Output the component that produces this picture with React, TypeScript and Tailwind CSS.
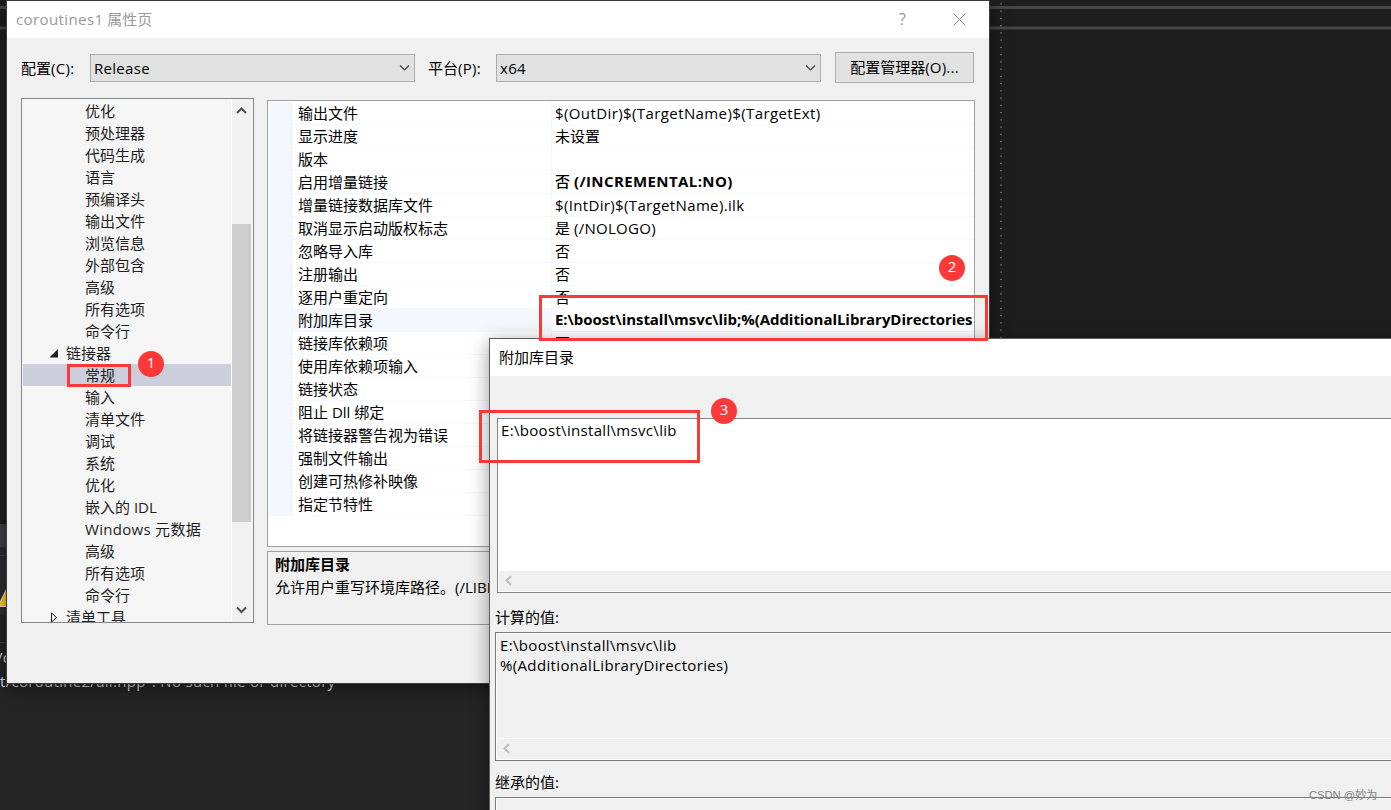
import React from "react";

const treeItems = [
  "优化", "预处理器", "代码生成", "语言", "预编译头", "输出文件", "浏览信息", "外部包含", "高级", "所有选项", "命令行",
  "链接器", "常规", "输入", "清单文件", "调试", "系统", "优化", "嵌入的 IDL", "Windows 元数据", "高级", "所有选项", "命令行", "清单工具",
];

type Property = { name: string; value: React.ReactNode; selected?: boolean };

const properties: Property[] = [
  { name: "输出文件", value: <span className="tracking-[0.4px]">$(OutDir)$(TargetName)$(TargetExt)</span> },
  { name: "显示进度", value: "未设置" },
  { name: "版本", value: "" },
  { name: "启用增量链接", value: <span className="-mt-0.5"><span className="font-medium">否</span> <b className="tracking-[0.4px]">(/INCREMENTAL:NO)</b></span> },
  { name: "增量链接数据库文件", value: <span className="tracking-[0.35px]">$(IntDir)$(TargetName).ilk</span> },
  { name: "取消显示启动版权标志", value: <span>是 <span className="tracking-[0.3px]">(/NOLOGO)</span></span> },
  { name: "忽略导入库", value: "否" },
  { name: "注册输出", value: "否" },
  { name: "逐用户重定向", value: "否" },
  { name: "附加库目录", value: <b className="-mt-0.5 tracking-[-0.05px]">E:\boost\install\msvc\lib;%(AdditionalLibraryDirectories</b>, selected: true },
  { name: "链接库依赖项", value: "否" },
  { name: "使用库依赖项输入", value: "" },
  { name: "链接状态", value: "" },
  { name: "阻止 Dll 绑定", value: "" },
  { name: "将链接器警告视为错误", value: "" },
  { name: "强制文件输出", value: "" },
  { name: "创建可热修补映像", value: "" },
  { name: "指定节特性", value: "" },
];

function Chevron({ dir, className }: { dir: "up" | "down" | "left"; className: string }) {
  const d = { up: "M1 6 L5.5 1.5 L10 6", down: "M1 1.5 L5.5 6 L10 1.5", left: "M7 1 L2.5 5.5 L7 10" }[dir];
  return (
    <svg className={className} width="11" height="11" viewBox="0 0 11 11" fill="none" stroke="currentColor">
      <path d={d} />
    </svg>
  );
}

function Combo({ value }: { value: string }) {
  return (
    <div className="flex h-7 w-[325px] items-center justify-between border border-[#adadad] bg-[#e1e1e1] pr-1 pl-[3px]">
      <span className="tracking-[0.3px]">{value}</span>
      <Chevron dir="down" className="mt-1 stroke-[1.2] text-[#404040]" />
    </div>
  );
}

function TreeView() {
  return (
    <div className="flex h-[525px] w-[233px] shrink-0 border border-[#828790] bg-[#f5f5f5]">
      <div className="flex w-[210px] shrink-0 flex-col overflow-hidden border-r border-white pt-px pl-px text-[#1e1e1e]">
        {treeItems.map((item, i) => {
          const parent = i === 11 || i === 23;
          return (
            <div key={i} className={`flex h-[22px] shrink-0 items-center ${i === 12 ? "bg-[#cccedb]" : ""} ${parent ? "pl-[26px]" : "pl-[62px]"}`}>
              {i === 11 && (
                <svg width="9" height="9" className="mr-2"><path d="M9 0 V8.5 H0.5 Z" fill="#1e1e1e" /></svg>
              )}
              {i === 23 && (
                <svg width="9" height="11" className="mr-2"><path d="M2.5 1 V10 L7.5 5.5 Z" fill="none" stroke="#1e1e1e" /></svg>
              )}
              <span className={i === 19 ? "tracking-[0.3px]" : ""}>{item}</span>
            </div>
          );
        })}
      </div>
      <div className="flex w-[19px] flex-col items-center bg-[#f1f1f1] pt-2">
        <Chevron dir="up" className="shrink-0 stroke-2 text-[#505050]" />
        <div className="mt-[106px] h-[298px] w-full bg-[#cdcdcd]" />
        <Chevron dir="down" className="mt-[84px] shrink-0 stroke-2 text-[#505050]" />
      </div>
    </div>
  );
}

function PropertyGrid() {
  return (
    <div className="h-[447px] w-[708px] overflow-hidden border border-[#a0a0a0] bg-white pt-px">
      {properties.map((p) => (
        <div key={p.name} className="flex h-[23px] bg-[#f4f7fc] pl-[25px]">
          <div className={`flex w-[259px] shrink-0 items-center border-r border-b border-[#f4f7fc] pl-[5px] ${p.selected ? "bg-[#f4f7fc]" : "bg-white"}`}>
            {p.name}
          </div>
          <div className="flex min-w-0 flex-1 items-center overflow-hidden border-b border-[#f4f7fc] bg-white pl-[3px] whitespace-nowrap">
            {p.value}
          </div>
        </div>
      ))}
    </div>
  );
}

function PropertyWindow() {
  return (
    <section className="absolute top-px left-[7px] h-[682px] w-[982px] bg-[#f0f0f0] shadow-[0_0_0_1px_#3c3c3c,0_4px_16px_rgba(0,0,0,0.55)]">
      <header className="flex h-[37px] items-center bg-white pr-[23px] pb-px pl-[9px] text-[#999]">
        <span className="flex-1"><span className="tracking-[0.4px]">coroutines1</span> 属性页</span>
        <span className="mr-[47px] text-[16px]">?</span>
        <svg width="13" height="13" stroke="#8b8b8b" fill="none"><path d="M.5 .5 L12.5 12.5 M12.5 .5 L.5 12.5" /></svg>
      </header>
      <div className="flex h-[61px] items-center pb-0.5 pl-[14px]">
        <span className="w-[69px]">配置<span className="tracking-[0.3px]">(C):</span></span>
        <Combo value="Release" />
        <span className="ml-[13px] w-[68px]">平台<span className="tracking-[0.3px]">(P):</span></span>
        <Combo value="x64" />
        <div className="ml-[14px] flex h-[31px] w-[139px] items-center justify-center border border-[#adadad] bg-[#e1e1e1] pb-px">配置管理器<span className="tracking-[0.2px]">(O)...</span></div>
      </div>
      <div className="flex gap-[13px] pl-[14px]">
        <div className="-mt-px"><TreeView /></div>
        <div className="flex flex-col gap-1 pt-px">
          <PropertyGrid />
          <div className="flex h-[74px] w-[708px] flex-col border border-[#a0a0a0] pt-px pl-[7px] leading-[23px] whitespace-nowrap">
            <b>附加库目录</b>
            <span>允许用户重写环境库路径。(/LIBPATH:folder)</span>
          </div>
        </div>
      </div>
    </section>
  );
}

function DirectoryWindow() {
  return (
    <section className="absolute top-[338px] left-[489px] flex h-[520px] w-[960px] flex-col border border-[#5c5c5c] bg-[#f0f0f0] shadow-[0_4px_18px_rgba(0,0,0,0.4)]">
      <header className="flex h-[37px] shrink-0 items-center bg-white pb-0.5 pl-[9px]">附加库目录</header>
      <div className="mt-[42px] ml-[7px] flex h-[175px] shrink-0 flex-col border border-[#828790] bg-white p-px">
        <div className="flex-1 pl-[2px] leading-5 tracking-[0.32px]">E:\boost\install\msvc\lib</div>
        <div className="flex h-5 items-center bg-[#f0f0f0] pb-px pl-[5px] text-[#bfbfbf]"><Chevron dir="left" className="stroke-2" /></div>
      </div>
      <div className="ml-[5px] h-[39px] shrink-0 pt-[13px] leading-[22px]">计算的值:</div>
      <div className="ml-[5px] flex h-[129px] shrink-0 flex-col border border-[#7a7a7a]">
        <div className="flex flex-1 flex-col border border-white">
          <div className="flex-1 pt-px pl-[3px] leading-5 tracking-[0.35px]">
            <div>E:\boost\install\msvc\lib</div>
            <div>%(AdditionalLibraryDirectories)</div>
          </div>
          <div className="flex h-[21px] items-center border-t border-white pb-px pl-[5px] text-[#bfbfbf]"><Chevron dir="left" className="stroke-2" /></div>
        </div>
      </div>
      <div className="ml-[5px] h-9 shrink-0 pt-[10px] leading-[22px]">继承的值:</div>
      <div className="ml-[5px] flex-1 border border-[#7a7a7a]"><div className="h-full border border-white" /></div>
    </section>
  );
}

function Editor() {
  return (
    <div className="flex h-full flex-col bg-[#1e1e1e] text-[#dcdcdc]">
      <div className="mt-[6px] h-[3px] shrink-0 bg-[#464646]" />
      <div className="mt-[17px] h-[4px] shrink-0 border-y border-[#303030] bg-[#464646]" />
      <div className="mt-[494px] h-[23px] shrink-0 bg-[#3f3f46]" />
      <div className="h-[68px] shrink-0 bg-[#2d2d30] pt-[8px]">
        <div className="h-px bg-[#3f3f46]" />
        <svg width="14" height="20" className="mt-[33px]"><path d="M-2 17.5 L7 -1 L18 17.5 Z" fill="#ffcc00" stroke="#eee" /></svg>
      </div>
      <div className="flex-1 bg-[#252526]">
        <div className="mt-[27px] h-px bg-[#3f3f46]" />
        <div className="mt-0.5 -ml-[3px] leading-6 tracking-[0.3px] whitespace-pre">/coroutine2</div>
        <div className="leading-6 tracking-[0.3px] whitespace-pre">t/coroutine2/all.hpp": No such file or directory</div>
      </div>
    </div>
  );
}

export default function App() {
  return (
    <main className="relative h-[810px] w-[1391px] overflow-hidden bg-[#1e1e1e] font-['Open_Sans','Noto_Sans_CJK_SC',sans-serif] text-[15px] leading-[22px] text-black">
      <Editor />
      <svg className="absolute top-0 left-[1000px]" width="2" height="340"><path d="M1 3.2 V340" stroke="#6a6a6a" strokeWidth="2" strokeDasharray="1.4 5.85" /></svg>
      <PropertyWindow />
      <DirectoryWindow />
      <div className="absolute top-[364px] left-[67px] h-[23px] w-16 border-3 border-[#fc3939]" />
      <div className="absolute top-[295px] left-[539px] h-[46px] w-[449px] border-3 border-[#fc3939]" />
      <div className="absolute top-[410px] left-[479px] h-[53px] w-[221px] border-3 border-[#fc3939]" />
      <div className="absolute top-[351px] left-[138px] h-[26px] w-[26px] rounded-full bg-[#fc3939] text-center leading-[23px] text-white">1</div>
      <div className="absolute top-[255px] left-[939px] h-[26px] w-[26px] rounded-full bg-[#fc3939] text-center leading-[23px] text-white">2</div>
      <div className="absolute top-[398px] left-[711px] h-[26px] w-[26px] rounded-full bg-[#fc3939] text-center leading-[23px] text-white">3</div>
      <div className="absolute top-[787px] left-[1309px] font-['Liberation_Sans','Noto_Sans_CJK_SC',sans-serif] text-[11.2px] leading-4 whitespace-nowrap text-[#808080]">CSDN @妙为</div>
    </main>
  );
}
